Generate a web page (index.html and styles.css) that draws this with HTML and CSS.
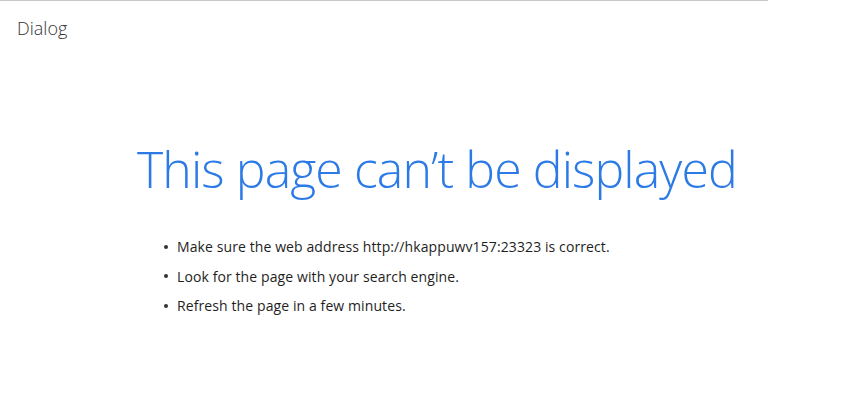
FILE: index.html
```html
<!DOCTYPE html>
<html>
<head>
    <title>Dialog</title>
    <link rel="stylesheet" href="styles.css">
</head>
<body>
    <div class="topline"></div>
    <div class="title-bar">Dialog</div>

    <div class="content">
        <h1>This page can&rsquo;t be displayed</h1>
        <ul class="tips">
            <li>Make sure the web address http://hkappuwv157:23323 is correct.</li>
            <li>Look for the page with your search engine.</li>
            <li>Refresh the page in a few minutes.</li>
        </ul>
    </div>
</body>
</html>
```

FILE: styles.css
```css
body {
    font-family: "Open Sans", "Noto Sans", sans-serif;
    margin: 0;
    background-color: #fff;
    color: #222;
}
.topline {
    width: 768px;
    border-top: 1px solid #c8c8c8;
}
.title-bar {
    padding: 15px 0 0 17px;
    font-size: 18px;
    font-weight: 300;
    line-height: 24px;
    color: #333;
}
.content {
    padding: 99px 0 0 137px;
}
h1 {
    margin: 0;
    font-size: 50px;
    font-weight: 300;
    line-height: 60px;
    color: #2b7ae6;
    letter-spacing: -0.9px;
}
.tips {
    margin: 33px 0 0 0;
    padding: 0 0 0 27px;
    list-style: none;
    font-size: 14px;
    line-height: 29.5px;
    letter-spacing: 0.1px;
    color: #1e1e1e;
}
.tips li {
    display: flex;
    align-items: center;
}
.tips li::before {
    content: "";
    width: 4px;
    height: 4px;
    margin-right: 9px;
    border-radius: 50%;
    background-color: #333;
}
```
